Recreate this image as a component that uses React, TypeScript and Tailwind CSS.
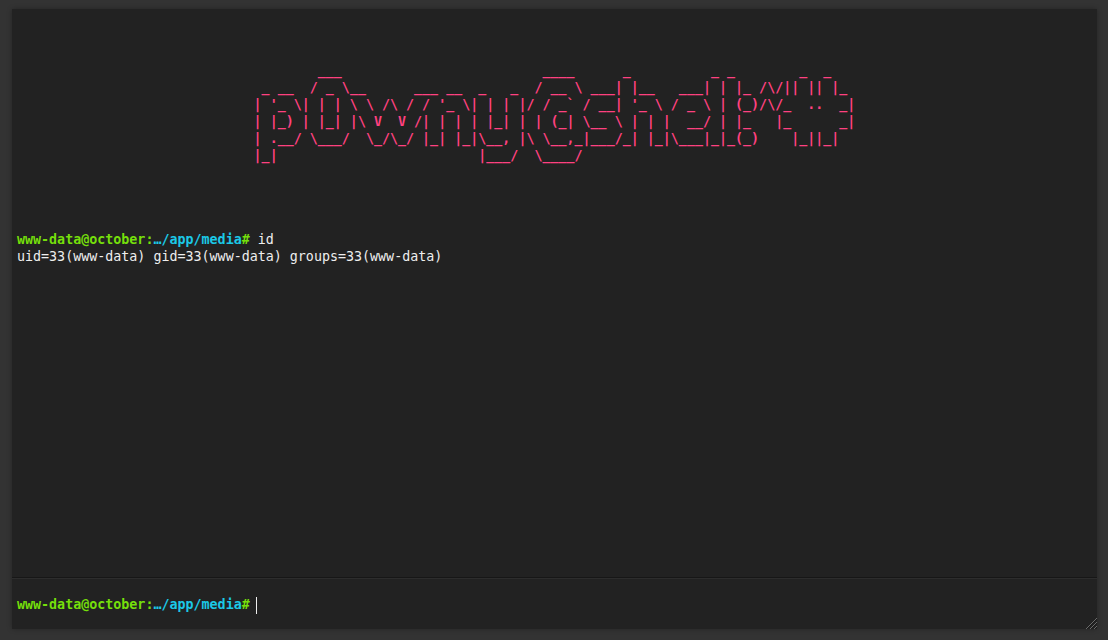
const logo = [
  "        ___                         ____      _          _ _        _  _   ",
  " _ __  / _ \\__      ___ __  _   _  / __ \\ ___| |__   ___| | |_ /\\/|| || |_ ",
  "| '_ \\| | | \\ \\ /\\ / / '_ \\| | | |/ / _` / __| '_ \\ / _ \\ | (_)/\\/_  ..  _|",
  "| |_) | |_| |\\ V  V /| | | | |_| | | (_| \\__ \\ | | |  __/ | |_   |_      _|",
  "| .__/ \\___/  \\_/\\_/ |_| |_|\\__, |\\ \\__,_|___/_| |_|\\___|_|_(_)    |_||_|  ",
  "|_|                         |___/  \\____/                                  ",
].join("\n");

function Prompt() {
  return (
    <span className="font-bold text-[#75DF0B]">
      www-data@october:<span className="text-[#1BC9E7]">…/app/media</span>#
    </span>
  );
}

function Grip() {
  return (
    <svg className="absolute bottom-0 right-0" width="12" height="12" viewBox="0 0 12 12" fill="none">
      <path d="M12 1 1 12M12 5 5 12M12 9 9 12" stroke="#6b6b6b" strokeWidth="1" />
      <path d="M12 2 2 12M12 6 6 12M12 10 10 12" stroke="#1a1a1a" strokeWidth="1" />
    </svg>
  );
}

export default function App() {
  return (
    <div className="h-[640px] w-[1108px] overflow-hidden bg-[#333] pb-[11px] pl-[12px] pr-[11px] pt-[9px] font-['DejaVu_Sans_Mono',monospace] text-[#eee]">
      <div className="relative flex h-full w-full flex-col items-stretch overflow-hidden bg-[#222] text-[13.333px] leading-[17px] shadow-[0_0_5px_rgba(0,0,0,0.3)]">
        <div className="grow overflow-hidden whitespace-pre-wrap p-[5px]">
          <div className="pb-[67px] pt-[48px] text-center font-bold text-[#FF4180]">{logo}</div>
          <div>
            <Prompt /> id
          </div>
          <div>uid=33(www-data) gid=33(www-data) groups=33(www-data)</div>
        </div>
        <div className="flex border-t border-t-[rgba(255,255,255,0.05)] py-[10px] shadow-[0_-1px_0_rgba(0,0,0,0.3)]">
          <div className="block h-[30px] px-[5px] leading-[32px]">
            <Prompt />
          </div>
          <div className="flex h-[30px] grow items-center pl-px pt-[2px]">
            <span className="h-[17px] w-px bg-[#eee]" />
          </div>
        </div>
        <Grip />
      </div>
    </div>
  );
}
